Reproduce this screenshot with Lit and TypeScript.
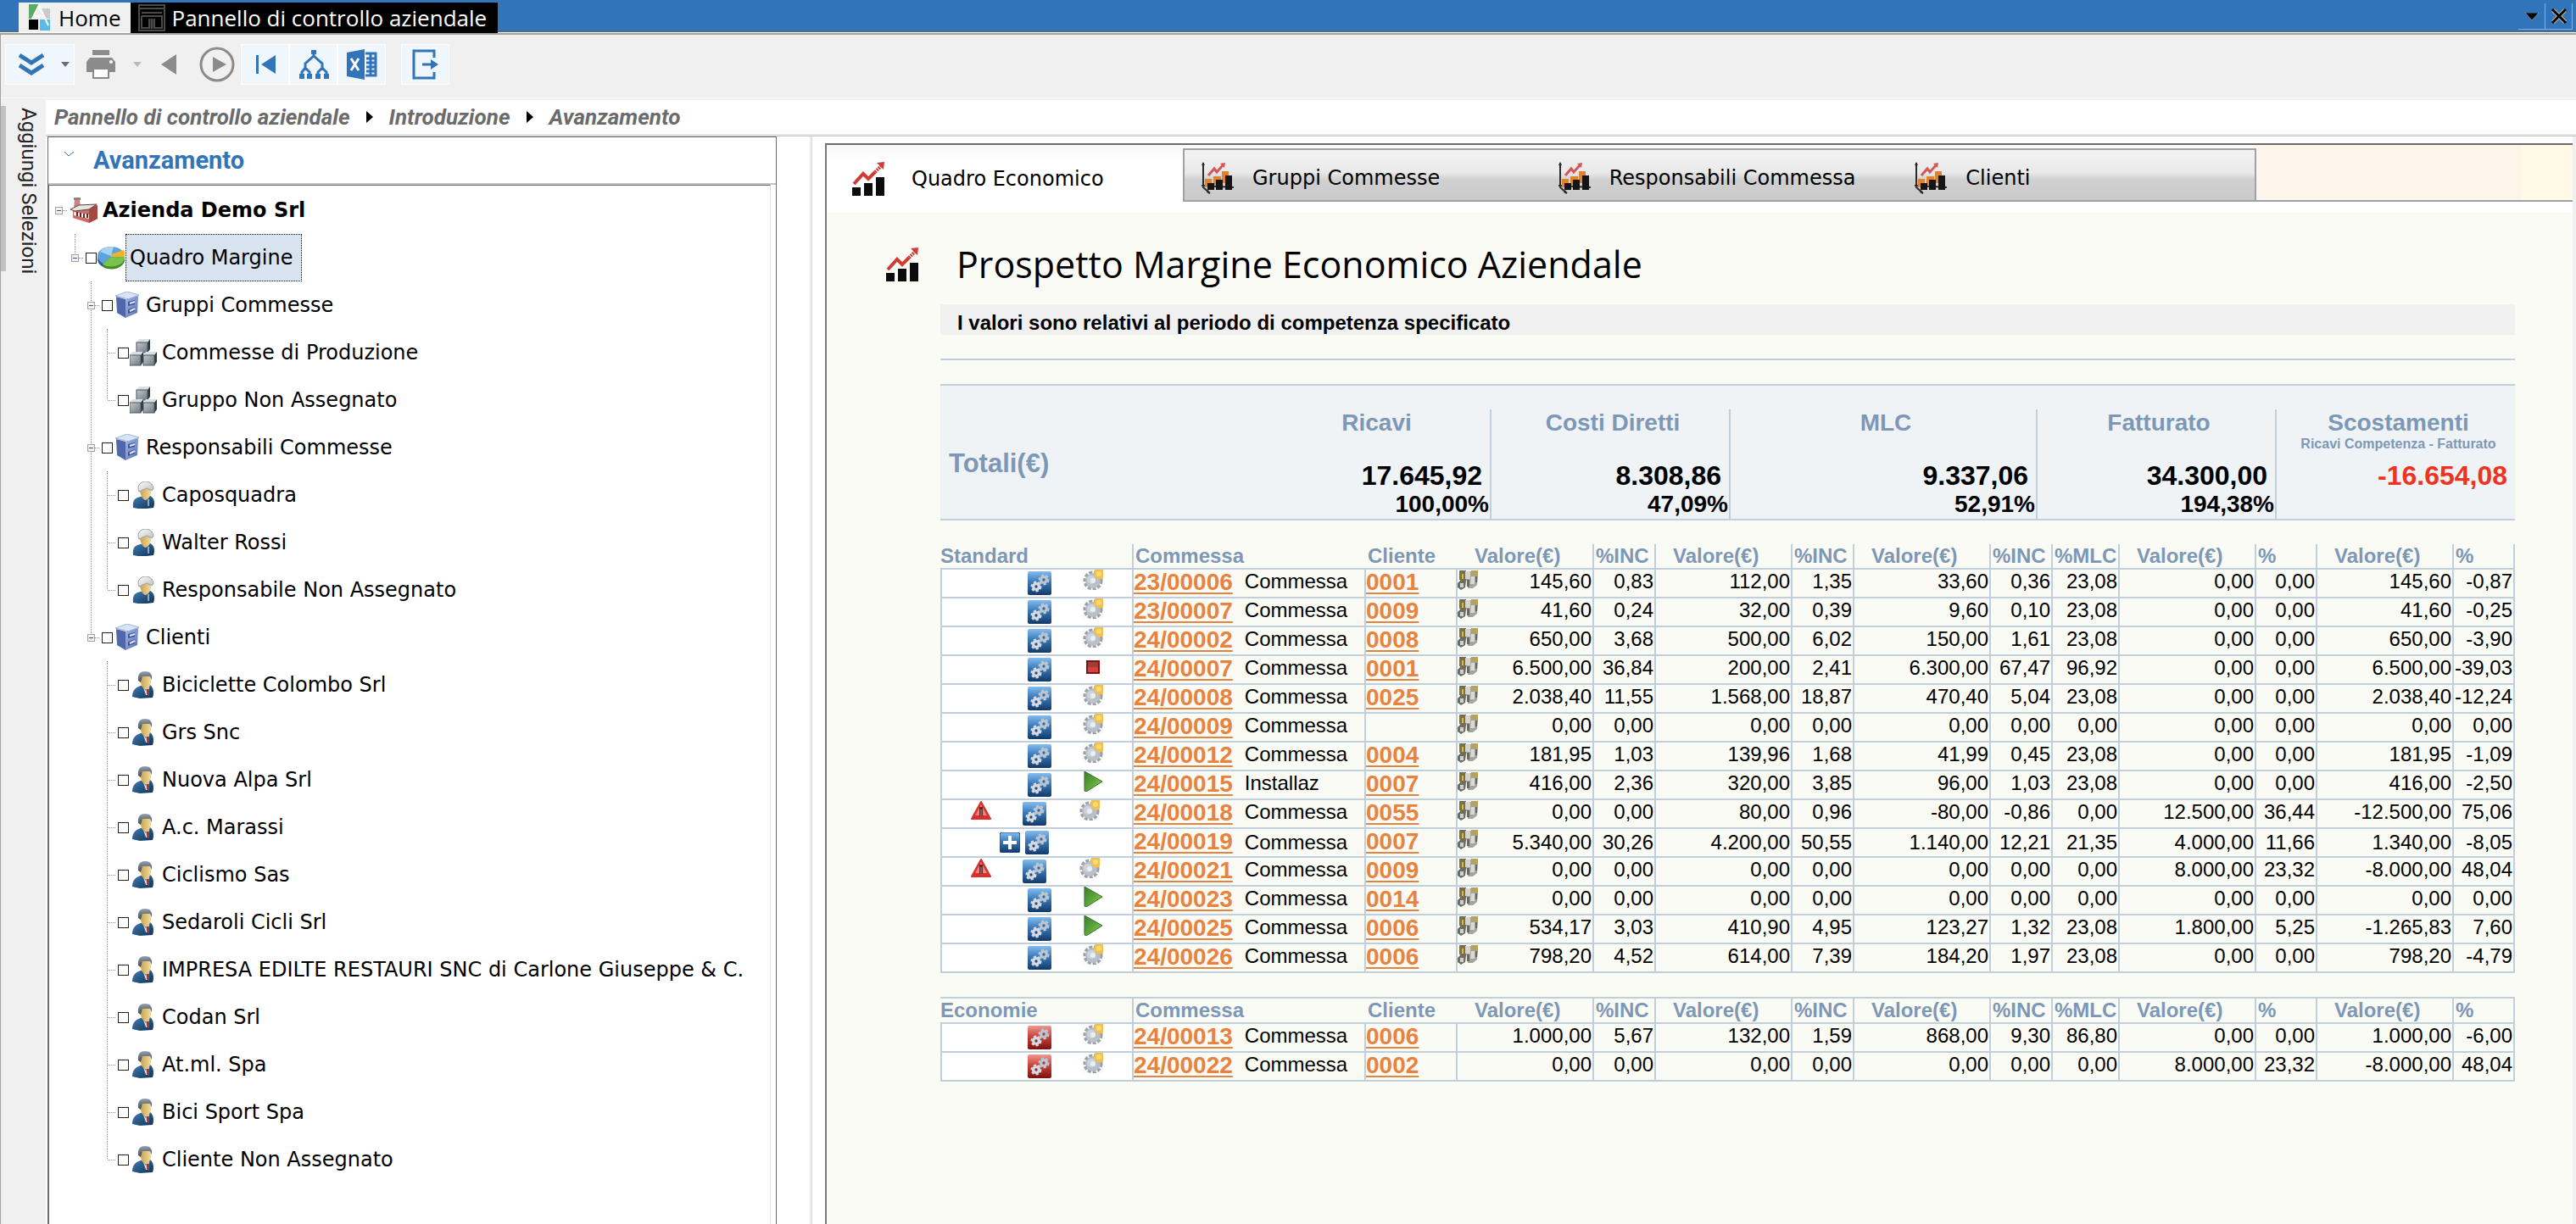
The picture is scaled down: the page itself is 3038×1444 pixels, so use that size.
import { LitElement, html, css, svg, nothing } from "lit";
import { customElement, state } from "lit/decorators.js";

type NodeIcon = "factory" | "pie" | "cabinet" | "cubes" | "worker" | "man";

interface TreeNode {
  label: string;
  icon: NodeIcon;
  level: number;
  /** For each column 0..level: does the connecting line go on below this row? */
  guides: boolean[];
  expandable?: boolean;
}

interface JobRow {
  job: string;
  kind: string;
  client: string;
  status: "open" | "stop" | "play" | "";
  flag?: "alert" | "plus";
  values: string[];
}

const clients = [
  "Biciclette Colombo Srl",
  "Grs Snc",
  "Nuova Alpa Srl",
  "A.c. Marassi",
  "Ciclismo Sas",
  "Sedaroli Cicli Srl",
  "IMPRESA EDILTE RESTAURI SNC di Carlone Giuseppe & C.",
  "Codan Srl",
  "At.ml. Spa",
  "Bici Sport Spa",
  "Cliente Non Assegnato",
];

const leaves = (labels: string[], icon: NodeIcon, parentContinues: boolean): TreeNode[] =>
  labels.map((label, i) => ({
    label,
    icon,
    level: 3,
    guides: [false, false, parentContinues, i < labels.length - 1],
  }));

const tree: TreeNode[] = [
  { label: "Azienda Demo Srl", icon: "factory", level: 0, guides: [false], expandable: true },
  { label: "Quadro Margine", icon: "pie", level: 1, guides: [false, false], expandable: true },
  { label: "Gruppi Commesse", icon: "cabinet", level: 2, guides: [false, false, true], expandable: true },
  ...leaves(["Commesse di Produzione", "Gruppo Non Assegnato"], "cubes", true),
  { label: "Responsabili Commesse", icon: "cabinet", level: 2, guides: [false, false, true], expandable: true },
  ...leaves(["Caposquadra", "Walter Rossi", "Responsabile Non Assegnato"], "worker", true),
  { label: "Clienti", icon: "cabinet", level: 2, guides: [false, false, false], expandable: true },
  ...leaves(clients, "man", false),
];

const row = (
  job: string,
  kind: string,
  client: string,
  status: JobRow["status"],
  values: string,
  flag?: JobRow["flag"],
): JobRow => ({ job, kind, client, status, flag, values: values.split(" ") });

const standard: JobRow[] = [
  row("23/00006", "Commessa", "0001", "open", "145,60 0,83 112,00 1,35 33,60 0,36 23,08 0,00 0,00 145,60 -0,87"),
  row("23/00007", "Commessa", "0009", "open", "41,60 0,24 32,00 0,39 9,60 0,10 23,08 0,00 0,00 41,60 -0,25"),
  row("24/00002", "Commessa", "0008", "open", "650,00 3,68 500,00 6,02 150,00 1,61 23,08 0,00 0,00 650,00 -3,90"),
  row("24/00007", "Commessa", "0001", "stop", "6.500,00 36,84 200,00 2,41 6.300,00 67,47 96,92 0,00 0,00 6.500,00 -39,03"),
  row("24/00008", "Commessa", "0025", "open", "2.038,40 11,55 1.568,00 18,87 470,40 5,04 23,08 0,00 0,00 2.038,40 -12,24"),
  row("24/00009", "Commessa", "", "open", "0,00 0,00 0,00 0,00 0,00 0,00 0,00 0,00 0,00 0,00 0,00"),
  row("24/00012", "Commessa", "0004", "open", "181,95 1,03 139,96 1,68 41,99 0,45 23,08 0,00 0,00 181,95 -1,09"),
  row("24/00015", "Installaz", "0007", "play", "416,00 2,36 320,00 3,85 96,00 1,03 23,08 0,00 0,00 416,00 -2,50"),
  row("24/00018", "Commessa", "0055", "open", "0,00 0,00 80,00 0,96 -80,00 -0,86 0,00 12.500,00 36,44 -12.500,00 75,06", "alert"),
  row("24/00019", "Commessa", "0007", "", "5.340,00 30,26 4.200,00 50,55 1.140,00 12,21 21,35 4.000,00 11,66 1.340,00 -8,05", "plus"),
  row("24/00021", "Commessa", "0009", "open", "0,00 0,00 0,00 0,00 0,00 0,00 0,00 8.000,00 23,32 -8.000,00 48,04", "alert"),
  row("24/00023", "Commessa", "0014", "play", "0,00 0,00 0,00 0,00 0,00 0,00 0,00 0,00 0,00 0,00 0,00"),
  row("24/00025", "Commessa", "0006", "play", "534,17 3,03 410,90 4,95 123,27 1,32 23,08 1.800,00 5,25 -1.265,83 7,60"),
  row("24/00026", "Commessa", "0006", "open", "798,20 4,52 614,00 7,39 184,20 1,97 23,08 0,00 0,00 798,20 -4,79"),
];

const economie: JobRow[] = [
  row("24/00013", "Commessa", "0006", "open", "1.000,00 5,67 132,00 1,59 868,00 9,30 86,80 0,00 0,00 1.000,00 -6,00"),
  row("24/00022", "Commessa", "0002", "open", "0,00 0,00 0,00 0,00 0,00 0,00 0,00 8.000,00 23,32 -8.000,00 48,04"),
];

const columnWidths = [228, 274, 108, 161, 73, 161, 73, 161, 73, 79, 161, 72, 161, 72];
const valueHeads = ["Valore(€)", "%INC", "Valore(€)", "%INC", "Valore(€)", "%INC", "%MLC", "Valore(€)", "%", "Valore(€)", "%"];

const totals = [
  { name: "Ricavi", value: "17.645,92", share: "100,00%" },
  { name: "Costi Diretti", value: "8.308,86", share: "47,09%" },
  { name: "MLC", value: "9.337,06", share: "52,91%" },
  { name: "Fatturato", value: "34.300,00", share: "194,38%" },
  { name: "Scostamenti", note: "Ricavi Competenza - Fatturato", value: "-16.654,08", share: "" },
];

const tabs = ["Quadro Economico", "Gruppi Commesse", "Responsabili Commessa", "Clienti"];

/* ---------- shared gradients ---------- */
const paints = html`<svg class="paints" aria-hidden="true">
  <defs>
    <linearGradient id="blueTile" x1="0" y1="0" x2="0" y2="1">
      <stop offset="0" stop-color="#86bdf0" /><stop offset=".45" stop-color="#3a78b8" /><stop offset="1" stop-color="#123a68" />
    </linearGradient>
    <linearGradient id="redTile" x1="0" y1="0" x2="0" y2="1">
      <stop offset="0" stop-color="#ee9a92" /><stop offset=".45" stop-color="#c9443c" /><stop offset="1" stop-color="#7d120e" />
    </linearGradient>
    <linearGradient id="green" x1="0" y1="0" x2="1" y2="1">
      <stop offset="0" stop-color="#3d7d2a" /><stop offset=".5" stop-color="#5aa63a" /><stop offset="1" stop-color="#8fe066" />
    </linearGradient>
    <linearGradient id="suit" x1="0" y1="0" x2="1" y2="1">
      <stop offset="0" stop-color="#3f7fb5" /><stop offset="1" stop-color="#0f3157" />
    </linearGradient>
    <linearGradient id="skin" x1="0" y1="0" x2="1" y2="0">
      <stop offset="0" stop-color="#c9a24f" /><stop offset="1" stop-color="#f3dc98" />
    </linearGradient>
    <linearGradient id="helmet" x1="0" y1="0" x2="1" y2="1">
      <stop offset="0" stop-color="#ffffff" /><stop offset="1" stop-color="#b9bcbf" />
    </linearGradient>
    <linearGradient id="hair" x1="0" y1="0" x2="0" y2="1">
      <stop offset="0" stop-color="#93a0ab" /><stop offset="1" stop-color="#3e4a55" />
    </linearGradient>
    <linearGradient id="cubeFace" x1="0" y1="0" x2="1" y2="1">
      <stop offset="0" stop-color="#c3cace" /><stop offset="1" stop-color="#6d7880" />
    </linearGradient>
    <linearGradient id="cabFace" x1="0" y1="0" x2="1" y2="1">
      <stop offset="0" stop-color="#a3b7e6" /><stop offset="1" stop-color="#5873b4" />
    </linearGradient>
  </defs>
</svg>`;

const cube = (x: number, y: number) => svg`<g transform="translate(${x} ${y})">
  <path d="M0 4 L3 0 H16 L13 4 Z" fill="#d9dee1" /><path d="M13 4 L16 0 V12 L13 16 Z" fill="#2f393f" />
  <rect y="4" width="13" height="12" fill="url(#cubeFace)" stroke="#4c575e" /></g>`;

const nodeIcons: Record<NodeIcon, unknown> = {
  factory: svg`<path d="M5 1 h6 l1 15 h-8 z" fill="#c98784" /><path d="M4 1 h8 v3 h-8 z" fill="#8d8584" />
    <path d="M3 14 L12 11 V15 L20 10 V14 L28 9 L32 11 V26 L22 31 L3 25 Z" fill="#cf6b66" />
    <path d="M22 14 L32 10 V26 L22 31 Z" fill="#a84844" />
    <path d="M0 15 L10 10 L31 9 L22 15 L5 17 Z" fill="#ebe5e2" stroke="#4e4644" />
    <path d="M4 18 L22 21 V26 L4 22 Z" fill="#f7ecea" /><path d="M8 18v5M12 19v5M16 20v5M20 20v5" stroke="#5a2a28" stroke-width="2" />`,
  pie: svg`<ellipse cx="16" cy="18" rx="16" ry="11" fill="#2a5e94" />
    <ellipse cx="16" cy="14" rx="16" ry="11" fill="#5fa3dd" />
    <path d="M3 9 A16 11 0 0 1 19 3 L16 14 Z" fill="#a5d2f5" />
    <path d="M16 12 L31 7 A16 11 0 0 1 32 14 L31 17 L16 15 Z" fill="#f2b32c" />
    <path d="M14 16 L32 15 V19 A16 11 0 0 1 8 28 L6 24 Z" fill="#3f8a25" /><path d="M14 16 L32 15 A16 11 0 0 1 6 24 Z" fill="#79c34d" />`,
  cabinet: svg`<path d="M2 5 L16 0 L30 4 L18 9 Z" fill="#dbe3f6" stroke="#a4b2d6" />
    <path d="M3 6 L14 9 V31 L4 25 Z" fill="#5068aa" /><path d="M14 9 L29 5 L28 25 L14 31 Z" fill="url(#cabFace)" />
    <path d="M17 12 L25 10 V15 L17 17 Z M17 21 L25 18 V23 L17 26 Z" fill="#3d5396" /><path d="M19 14 L25 12 M19 23 L25 20" stroke="#e2e9fb" stroke-width="2" />`,
  cubes: svg`${cube(8, 0)}${cube(0, 15)}${cube(16, 15)}`,
  worker: svg`<path d="M4 31 C3 22 6 19 13 18 L24 17 C29 19 30 25 28 31 L20 32 L10 32 Z" fill="url(#suit)" />
    <path d="M12 8 L25 8 C26 15 23 21 18 22 C14 20 12 15 12 8 Z" fill="url(#skin)" />
    <path d="M10 9 C10 2 15 0 19 0 C25 0 28 5 28 9 L26 11 L20 8 L11 12 Z" fill="url(#helmet)" stroke="#9c9fa1" />
    <path d="M22 21 v8" stroke="#8fa4b8" stroke-width="2" />`,
  man: svg`<path d="M3 30 C3 21 8 19 13 17 L24 16 C28 19 29 25 27 31 L12 32 Z" fill="url(#suit)" />
    <path d="M12 6 H25 C26 13 24 20 19 22 C14 19 12 14 12 6 Z" fill="url(#skin)" />
    <path d="M10 11 C9 3 13 0 18 0 C24 0 27 3 26 10 L24 6 L15 6 L13 13 Z" fill="url(#hair)" />
    <path d="M16 19 L19 23 L23 18 L22 28 L19 28 Z" fill="#d5dce4" /><path d="M20 21 L23 21 L23 30 L20 27 Z" fill="#b5332c" />`,
};

const cog = (cx: number, cy: number, r: number, fill: string, hole: string) => svg`
  <circle cx=${cx} cy=${cy} r=${r} fill=${fill} /><circle cx=${cx} cy=${cy} r=${r} fill="none" stroke=${fill} stroke-width="3" stroke-dasharray="3 2" />
  <circle cx=${cx} cy=${cy} r=${r / 3} fill=${hole} />`;

const tileIcon = (red: boolean) => html`<svg class="i28" viewBox="0 0 28 28" aria-hidden="true">
  <rect x="0" y="0" width="28" height="28" rx="2" fill=${red ? "url(#redTile)" : "url(#blueTile)"} />
  ${cog(10, 18, 5, "#d3dae1", red ? "#8f2722" : "#1f4d80")}${cog(19, 10, 5, "#b9c5d1", red ? "#b03c35" : "#34699f")}
</svg>`;

const statusIcon = {
  open: html`<svg class="i24" viewBox="0 0 24 24" aria-hidden="true"><rect width="24" height="24" fill="#fafaf6" />
    <circle cx="12" cy="13" r="9" fill="#b9c0c8" /><circle cx="12" cy="13" r="10" fill="none" stroke="#98a1ab" stroke-width="3" stroke-dasharray="4 2" />
    <circle cx="10" cy="12" r="5" fill="#cdd4dc" /><circle cx="12" cy="13" r="3" fill="#eceff2" />
    <path d="M14 0 H24 V10 L20 12 L16 10 L13 6 Z" fill="#f1c04e" /><circle cx="19" cy="5" r="3" fill="#fadb78" /></svg>`,
  stop: html`<svg class="i24" viewBox="0 0 24 24" aria-hidden="true"><rect x="4" y="5" width="16" height="16" fill="#7a1512" />
    <rect x="6" y="7" width="12" height="6" fill="#a33a35" /><rect x="6" y="13" width="12" height="6" fill="#d2423a" /></svg>`,
  play: html`<svg class="i24" viewBox="0 0 24 24" aria-hidden="true"><path d="M2 0 L23 12 L4 24 L2 23 Z" fill="url(#green)" stroke="#356d24" /></svg>`,
};

const alertIcon = html`<svg class="i24" viewBox="0 0 24 24" role="img" aria-label="Avviso">
  <path d="M12 2 L23 22 H1 Z" fill="#d8302c" stroke="#d8302c" stroke-width="2" stroke-linejoin="round" /><path d="M12 5 L19 18 H5 Z" fill="#ee837e" />
  <path d="M12 8 V19" stroke="#5b2a28" stroke-width="4" /><path d="M12 11 V19" stroke="#b58a88" stroke-width="1" /></svg>`;

const plusIcon = html`<svg class="i24" viewBox="0 0 24 24" aria-hidden="true"><rect width="24" height="24" rx="3" fill="url(#blueTile)" stroke="#1c4b7d" />
  <path d="M12 4 V20 M4 12 H20" stroke="#fff" stroke-width="4" /></svg>`;

const equipmentIcon = html`<svg class="i24" viewBox="0 0 24 24" aria-hidden="true">
  <path d="M2 1 H10 V13 L9 21 L4 24 L0 21 V16 L3 13 Z" fill="#6e6d63" /><path d="M11 2 H24 V9 L23 18 L18 22 H12 V15 L10 12 Z" fill="#a5a59d" />
  <rect x="2" y="3" width="6" height="9" fill="#84712c" /><rect x="5" y="5" width="2" height="6" fill="#cdb768" />
  <rect x="16" y="1" width="8" height="6" fill="#b7a25a" /><rect x="9" y="2" width="6" height="9" fill="#d4d4cd" />
  <path d="M16 8 H20 V17 H15 Z" fill="#d9d9d4" /><path d="M3 16 H7 V21 H3 Z" fill="#d2d2cc" /><path d="M11 12 H14 V20 H11 Z M21 8 H23 V15 H21 Z" fill="#6b6a62" /></svg>`;

const trendIcon = html`<svg class="trend" viewBox="0 0 38 40" aria-hidden="true">
  <path d="M2 26 L13 14 L19 20 L27 12" fill="none" stroke="#d23b35" stroke-width="4" />
  <path d="M27 12 L34 5" stroke="#d23b35" stroke-width="4" stroke-dasharray="2 1" /><path d="M29 1 L38 0 L37 9 Z" fill="#d23b35" />
  <path d="M0 30 H10 V40 H0 Z M14 25 H24 V40 H14 Z M28 18 H38 V40 H28 Z" fill="#0b0b0b" /></svg>`;

const barsIcon = html`<svg class="trend" viewBox="0 0 38 40" aria-hidden="true">
  <path d="M2 2 V31 L10 38 M0 29 L38 31" fill="none" stroke="#2b2b2b" stroke-width="2" />
  <path d="M0 5 L2 1 L4 5 Z M8 34 L10 39 L6 37 Z" fill="#2b2b2b" />
  <path d="M4 21 H12 V30 H4 Z M14 18 H23 V28 H14 Z M24 12 H32 V26 H24 Z" fill="#e0832c" />
  <path d="M7 26 H15 V34 H7 Z M17 22 H25 V34 H17 Z M28 17 H36 V34 H28 Z" fill="#151515" />
  <path d="M8 17 L15 9 L18 13 L26 4" fill="none" stroke="#d4575a" stroke-width="3" /><path d="M22 3 L28 2 L27 8 Z" fill="#d4575a" /></svg>`;

@customElement("app-root")
export class AppRoot extends LitElement {
  @state() private activeTab = 0;

  static styles = css`
    :host {
      display: flex;
      flex-direction: column;
      min-height: 100vh;
      box-sizing: border-box;
      background: #fff;
      color: #000;
      font-family: "DejaVu Sans", sans-serif;
      font-size: 24px;
    }
    *, *::before, *::after { box-sizing: border-box; }
    svg { display: block; flex: none; }
    button { border: 0; padding: 0; margin: 0; background: none; font: inherit; color: inherit; }
    .paints { width: 0; height: 0; position: absolute; }

    /* window bar */
    .windowbar { display: flex; align-items: flex-end; height: 41px; padding: 3px 4px 0 22px; background: #3174b9; border-bottom: 2px solid #a5a2a2; box-shadow: inset 0 -1px #fff, inset 0 -2px #6b6663; }
    .wintab { display: flex; align-items: center; height: 36px; gap: 10px; padding: 0 12px; font-family: "Open Sans", sans-serif; font-size: 26px; line-height: 40px; white-space: nowrap; }
    .wintab.home { background: #f0f0f0; height: 35px; margin-bottom: 1px; }
    .wintab.open { background: #000; color: #fff; padding: 0 13px 0 9px; gap: 7px; }
    .wincontrols { display: flex; margin: 0 0 4px auto; border-bottom: 1px solid #7fb1e4; align-self: flex-end; }
    .wincontrols button { width: 32px; height: 30px; display: grid; place-items: center; border-right: 1px solid #7fb1e4; }

    /* toolbar */
    .toolbar { display: flex; align-items: flex-start; height: 77px; padding: 11px 5px; background: #f0f0f0; border-left: 1px solid #a5a2a2; box-shadow: inset 0 -2px #f0f0f0, inset 0 -3px #fafafa; }
    .tool { height: 48px; width: 57px; display: flex; align-items: center; justify-content: center; border: 1px solid #f0f0f0; }
    .tool.lit { background: #eff7fd; border-color: #fff; }
    .tool.split { width: 82px; gap: 20px; padding-left: 10px; }
    .tool.gap { margin-left: 18px; }

    /* body */
    .body { flex: 1; display: grid; grid-template: auto 1fr / 54px 903fr 2081fr; min-height: 0; }
    .strip { grid-row: 1 / 3; background: #f0f0f0; border-left: 1px solid #a5a2a2; display: flex; align-items: flex-start; padding-top: 7px; }
    .striptab { writing-mode: vertical-rl; border-left: 6px solid #c2c2c2; padding: 2px 0 0 13px; height: 195px; line-height: 28px; font-family: Roboto, sans-serif; font-size: 24px; color: #222; white-space: nowrap; }
    .crumbs { grid-column: 2 / 4; display: flex; align-items: center; gap: 19px; height: 43px; padding: 0 0 3px 10px; border-bottom: 1px solid #c4c4c4; box-shadow: inset 0 -2px #e8e8e8; font-family: Roboto, sans-serif; font-size: 26px; font-weight: 700; font-style: italic; }
    .crumbs a { color: #6b6b6b; text-decoration: none; }

    /* tree */
    .left { padding: 0 39px 0 2px; border-right: 2px solid #ececec; display: flex; }
    .treepane { flex: 1; display: flex; flex-direction: column; border: 1px solid #6b6b6b; border-bottom: 0; min-width: 0; }
    .panehead { display: flex; align-items: center; gap: 23px; height: 56px; padding: 0 19px; border-bottom: 2px solid #c4c4c4; }
    .panehead h2 { margin: 0; font: 700 29px/34px Roboto, sans-serif; color: #3174b9; }
    .panehead svg { margin-bottom: 16px; }
    .tree { flex: 1; margin: 0 6px 0 0; padding: 1px 0 0 2px; list-style: none; border: 1px solid #6b6b6b; border-right-color: #e3e3e3; border-bottom: 0; }
    .node { display: flex; align-items: center; height: 56px; white-space: nowrap; }
    .node input { appearance: none; flex: none; width: 13px; height: 13px; margin: 0; border: 1px solid #222; background: #fff; }
    .node input:checked { background: #3174b9; }
    .pic { width: 34px; display: grid; place-items: center; flex: none; }
    .node .name { padding: 0 10px 0 4px; height: 56px; line-height: 54px; border: 1px solid transparent; }
    .node.root .name { font-weight: 700; }
    .node.current .name { background: #d7e4ef; border: 1px dotted #000; }

    /* report */
    .right { padding: 8px 0 0 15px; border-right: 4px solid #f0f0f0; border-left: 1px solid #ddd; display: flex; min-width: 0; }
    .report { flex: 1; min-width: 0; border-left: 2px solid #77787a; border-top: 2px solid #6b6b6b; background: #fbfbf6; }
    .tabs { display: grid; grid-template-columns: 420fr 1266fr 373fr; height: 67px; }
    .tab { display: flex; align-items: center; width: 420px; height: 100%; text-align: left; font-size: 24px; white-space: nowrap; }
    .tab.first { width: auto; background: linear-gradient(#f8f8f8, #fff 30%); padding: 13px 0 0 30px; gap: 32px; }
    .others { display: flex; margin-top: 4px; border: 2px solid #9ea2a8; background: linear-gradient(#f3f3f3, #e9e9e9 45%, #d0d0d0 60%, #cacaca); min-width: 0; }
    .others .tab { padding: 7px 0 0 20px; gap: 22px; flex: 1 1 0; }
    .tabrest { background: linear-gradient(to right, #fdf5ea 84%, #fff9e6 84%); border-bottom: 2px solid #9ea2a8; }
    .below { height: 13px; background: #fff; }
    .content { padding: 24px 68px 40px 134px; }
    .headline { display: flex; align-items: center; gap: 45px; height: 74px; margin: 0 0 10px -64px; }
    h1 { margin: 0; font: 400 43px/60px "Open Sans", sans-serif; white-space: nowrap; }
    .period { margin: 0; height: 36px; padding: 8px 20px 0; background: #f0f0f0; font: 700 24px/28px "Liberation Sans", sans-serif; }
    .rule { margin: 28px 0; height: 2px; border: 0; background: #c1cfdb; }

    .totals { display: grid; grid-template-columns: 375fr 275fr 282fr 362fr 282fr 281fr; height: 161px; margin-bottom: 28px; padding-top: 28px; background: #eff3f6; border: solid #c1cfdb; border-width: 2px 0; font-family: "Liberation Sans", sans-serif; font-weight: 700; }
    .totals h2 { margin: 0; padding: 46px 0 0 10px; font-size: 31px; line-height: 36px; color: #7c98b6; }
    .total { display: flex; flex-direction: column; border-right: 2px solid #c1cfdb; text-align: right; }
    .total:last-child { border-right: 0; }
    .total h3 { margin: 0; height: 60px; padding-left: 6px; font-size: 28px; line-height: 32px; color: #7c98b6; text-align: center; }
    .total small { display: block; font-size: 16px; line-height: 18px; }
    .total .amount { padding-right: 9px; font-size: 32px; line-height: 36px; }
    .total .share { padding-right: 1px; font-size: 28px; line-height: 32px; }
    .total .negative { color: #ee3322; }

    table { width: 100%; table-layout: fixed; border-collapse: separate; border-spacing: 0; font: 24px/28px "Liberation Sans", sans-serif; }
    table + table { margin-top: 28px; border-top: 2px solid #c1cfdb; }
    th { height: 30px; padding: 0 0 0 2px; font-weight: 700; line-height: 28px; color: #7c98b6; text-align: left; border-bottom: 2px solid #c1cfdb; white-space: nowrap; }
    th.line { border-right: 2px solid #c1cfdb; }
    th.value { padding-left: 20px; }
    th:first-child { padding-left: 0; }
    td { height: 34px; padding: 0 1px; vertical-align: top; border: solid #c1cfdb; border-width: 0 2px 2px 0; white-space: nowrap; text-align: right; }
    td.icons { border-left-width: 2px; background: #fff; padding: 0; }
    td.text { text-align: left; padding-left: 0; }
    td a { font-size: 28px; line-height: 30px; font-weight: 700; color: #e8833f; text-decoration: underline; text-decoration-thickness: 2px; text-underline-offset: 3px; }
    .kindcell { display: flex; gap: 14px; height: 32px; }
    .valuecell { display: flex; justify-content: space-between; height: 32px; }
    .slots { display: grid; grid-template-columns: 34px 34px 33px 65px 1fr; height: 32px; }
    .slots > :first-child { grid-column: 2; }
    .slots > :nth-child(2) { grid-column: 3; }
    .slots > :nth-child(3) { grid-column: 4; padding-top: 2px; }
    .slots > :nth-child(4) { grid-column: 5; }
    .slots.alert { grid-template-columns: 34px 34px 27px 67px 1fr; }
    .slots.plus { grid-template-columns: 34px 34px 30px 67px 1fr; }
    .slots.plus > :nth-child(2) { padding-top: 4px; }
    tr.plus td.num, tr.plus .kindcell span { line-height: 32px; }
    .i28 { width: 28px; height: 28px; }
    .i24 { width: 24px; height: 24px; }
    .trend { width: 38px; height: 40px; }
  `;

  private guide(node: TreeNode, col: number) {
    const own = col === node.level;
    const goesOn = node.guides[col];
    const hasLine = col > 0 && (own || goesOn);
    return html`<svg width=${own ? 22 : 19} height="56" viewBox="0 0 ${own ? 22 : 19} 56" aria-hidden="true">
      ${hasLine ? svg`<path d="M9.5 0 V${goesOn ? 56 : 28}" stroke="#8a8a8a" stroke-dasharray="1 1" />` : nothing}
      ${own ? svg`<path d="M10 28.5 H20" stroke="#8a8a8a" stroke-dasharray="1 1" />` : nothing}
      ${own && node.expandable
        ? svg`<rect x="5.5" y="24.5" width="8" height="8" fill="#f4f4f4" stroke="#a2a2a2" /><path d="M7 28.5 H12" stroke="#3a4fa0" />`
        : nothing}
    </svg>`;
  }

  private renderNode(node: TreeNode, i: number) {
    const cols = Array.from({ length: node.level + 1 }, (_, k) => k);
    return html`<li class="node ${node.level === 0 ? "root" : ""} ${i === 1 ? "current" : ""}">
      ${cols.map((k) => this.guide(node, k))}
      ${node.level > 0 ? html`<input type="checkbox" id="node${i}" />` : nothing}
      <span class="pic"><svg width="32" height="32" viewBox="0 0 32 32" aria-hidden="true">${nodeIcons[node.icon]}</svg></span>
      ${node.level > 0 ? html`<label class="name" for="node${i}">${node.label}</label>` : html`<span class="name">${node.label}</span>`}
    </li>`;
  }

  private renderRow(r: JobRow, red: boolean) {
    return html`<tr class=${r.flag ?? ""}>
      <td class="icons">
        <div class="slots ${r.flag ?? ""}">
          <span>${r.flag === "alert" ? alertIcon : nothing}</span>
          <span>${r.flag === "plus" ? plusIcon : nothing}</span>
          <span>${tileIcon(red)}</span>
          <span>${r.status ? statusIcon[r.status] : nothing}</span>
        </div>
      </td>
      <td class="text"><div class="kindcell"><a href="#${r.job}">${r.job}</a><span>${r.kind}</span></div></td>
      <td class="text">${r.client ? html`<a href="#${r.client}">${r.client}</a>` : nothing}</td>
      ${r.values.map((v, i) =>
        i === 0
          ? html`<td class="num text"><div class="valuecell"><span>${red ? nothing : equipmentIcon}</span><span>${v}</span></div></td>`
          : html`<td class="num">${v}</td>`,
      )}
    </tr>`;
  }

  private renderTable(name: string, rows: JobRow[], red = false) {
    return html`<table>
      <colgroup>${columnWidths.map((w) => html`<col width=${w} />`)}</colgroup>
      <thead>
        <tr>
          <th class="line">${name}</th><th>Commessa</th><th>Cliente</th>
          ${valueHeads.map((h) => html`<th class="line ${h.startsWith("V") ? "value" : ""}">${h}</th>`)}
        </tr>
      </thead>
      <tbody>${rows.map((r) => this.renderRow(r, red))}</tbody>
    </table>`;
  }

  private renderToolbar() {
    const blue = "#3174b9";
    const grey = "#8b8b8b";
    return html`<div class="toolbar" role="toolbar">
      <button class="tool lit split" aria-label="Espandi">
        <svg width="30" height="28" viewBox="0 0 30 28"><path d="M1 3 L15 12 L29 3 M1 15 L15 24 L29 15" fill="none" stroke=${blue} stroke-width="5" /></svg>
        <svg width="10" height="6" viewBox="0 0 10 6"><path d="M0 0 H10 L5 6 Z" fill="#6d6d6d" /></svg>
      </button>
      <button class="tool split" aria-label="Stampa">
        <svg width="36" height="36" viewBox="0 0 36 36"><path d="M8 1 H28 V7 H8 Z M5 10 H31 L35 15 V27 H28 V23 H8 V27 H1 V15 Z" fill=${grey} /><path d="M9 23 H27 V34 H9 Z" fill="#fff" stroke=${grey} stroke-width="2" /><circle cx="30" cy="15" r="2" fill="#fff" /></svg>
        <svg width="10" height="6" viewBox="0 0 10 6"><path d="M0 0 H10 L5 6 Z" fill="#b9b9b9" /></svg>
      </button>
      <button class="tool" aria-label="Indietro"><svg width="18" height="24" viewBox="0 0 18 24"><path d="M18 0 V24 L0 12 Z" fill=${grey} /></svg></button>
      <button class="tool" aria-label="Avvia"><svg width="42" height="42" viewBox="0 0 42 42"><circle cx="21" cy="21" r="19" fill="none" stroke=${grey} stroke-width="3" /><path d="M16 12 V30 L32 21 Z" fill=${grey} /></svg></button>
      <button class="tool lit" aria-label="Inizio"><svg width="24" height="24" viewBox="0 0 24 24"><path d="M1 1 H4 V23 H1 Z M24 1 V23 L7 12 Z" fill=${blue} /></svg></button>
      <button class="tool lit" aria-label="Struttura"><svg width="36" height="36" viewBox="0 0 36 36"><g fill="none" stroke=${blue} stroke-width="3"><path d="M18 4 V8 M18 8 L8 17 V24 M18 8 L28 17 V24 M4 30 V27 L8 22 L13 27 V30 M23 30 V27 L28 22 L33 27 V30" /></g><path d="M15 1 H21 V6 H15 Z M1 29 H7 V35 H1 Z M10 29 H16 V35 H10 Z M20 29 H26 V35 H20 Z M30 29 H36 V35 H30 Z" fill=${blue} /></svg></button>
      <button class="tool lit" aria-label="Esporta in Excel"><svg width="36" height="36" viewBox="0 0 36 36"><path d="M0 4 L21 0 V36 L0 32 Z" fill=${blue} /><path d="M5 11 L14 25 M14 11 L5 25" stroke="#fff" stroke-width="3" /><path d="M22 5 H34 V31 H22 M23 11 H34 M23 16 H34 M23 21 H34 M23 26 H34 M28 5 V31" fill="none" stroke=${blue} stroke-width="3" /></svg></button>
      <button class="tool lit gap" aria-label="Esci"><svg width="32" height="36" viewBox="0 0 32 36"><path d="M26 10 V2 H2 V34 H26 V27 M12 18 H25" fill="none" stroke=${blue} stroke-width="3" /><path d="M22 12 L31 18 L22 24 Z" fill=${blue} /></svg></button>
    </div>`;
  }

  render() {
    const arrow = html`<svg width="8" height="14" viewBox="0 0 8 14" aria-hidden="true"><path d="M0 0 L8 7 L0 14 Z" fill="#000" /></svg>`;
    return html`
      ${paints}
      <header class="windowbar">
        <button class="wintab home">
          <svg width="25" height="31" viewBox="0 0 25 31" aria-hidden="true"><path d="M0 0 H13 L5 17 H0 Z" fill="#5cab63" /><path d="M14 5 H25 V17 H18 Z" fill="#c9cacb" /><path d="M0 18 H11 V30 H0 Z" fill="#000" /><path d="M13 18 H25 V31 H13 Z" fill="#5cb8e8" /><path d="M4 17 L12 1 L23 25 M6 14 H14" fill="none" stroke="#fff" stroke-width="2" /></svg>
          Home
        </button>
        <button class="wintab open">
          <svg width="32" height="32" viewBox="0 0 32 32" aria-hidden="true"><g fill="none" stroke="#4a4a4a" stroke-width="2"><path d="M1 1 H31 V31 H1 Z M1 5 H31 M4 10 H28 M4 14 H28 V28 H19 V17 M4 14 V28 H13 V17" /><path d="M16 17 V29" stroke-width="3" /></g></svg>
          Pannello di controllo aziendale
        </button>
        <div class="wincontrols">
          <button aria-label="Elenco finestre"><svg width="16" height="9" viewBox="0 0 16 9"><path d="M0 0 H16 L8 9 Z" fill="#000" stroke="#c9b9a0" stroke-width=".6" /></svg></button>
          <button aria-label="Chiudi"><svg width="18" height="18" viewBox="0 0 18 18"><path d="M2 2 L16 16 M16 2 L2 16" stroke="#c9b9a0" stroke-width="5" /><path d="M1 1 L17 17 M17 1 L1 17" stroke="#000" stroke-width="3" /></svg></button>
        </div>
      </header>
      ${this.renderToolbar()}
      <div class="body">
        <aside class="strip"><button class="striptab">Aggiungi Selezioni</button></aside>
        <nav class="crumbs">
          <a href="#pannello">Pannello di controllo aziendale</a>${arrow}<a href="#introduzione">Introduzione</a>${arrow}<a href="#avanzamento">Avanzamento</a>
        </nav>
        <section class="left">
          <div class="treepane">
            <div class="panehead">
              <svg width="11" height="7" viewBox="0 0 11 7" aria-hidden="true"><path d="M0 1 L5 6 L11 1" fill="none" stroke="#3174b9" /></svg>
              <h2>Avanzamento</h2>
            </div>
            <ul class="tree">${tree.map((n, i) => this.renderNode(n, i))}</ul>
          </div>
        </section>
        <main class="right">
          <div class="report">
            <div class="tabs" role="tablist">
              <button class="tab first" role="tab" aria-selected=${this.activeTab === 0} @click=${() => (this.activeTab = 0)}>${trendIcon}${tabs[0]}</button>
              <div class="others" role="presentation">
                ${tabs.slice(1).map(
                  (t, i) => html`<button class="tab" role="tab" aria-selected=${this.activeTab === i + 1} @click=${() => (this.activeTab = i + 1)}>${barsIcon}${t}</button>`,
                )}
              </div>
              <div class="tabrest"></div>
            </div>
            <div class="below"></div>
            <div class="content">
              <div class="headline">${trendIcon}<h1>Prospetto Margine Economico Aziendale</h1></div>
              <p class="period">I valori sono relativi al periodo di competenza specificato</p>
              <hr class="rule" />
              <section class="totals">
                <h2>Totali(€)</h2>
                ${totals.map(
                  (t) => html`<div class="total">
                    <h3>${t.name}${t.note ? html`<small>${t.note}</small>` : nothing}</h3>
                    <span class="amount ${t.value.startsWith("-") ? "negative" : ""}">${t.value}</span>
                    <span class="share">${t.share}</span>
                  </div>`,
                )}
              </section>
              ${this.renderTable("Standard", standard)}
              ${this.renderTable("Economie", economie, true)}
            </div>
          </div>
        </main>
      </div>
    `;
  }
}
